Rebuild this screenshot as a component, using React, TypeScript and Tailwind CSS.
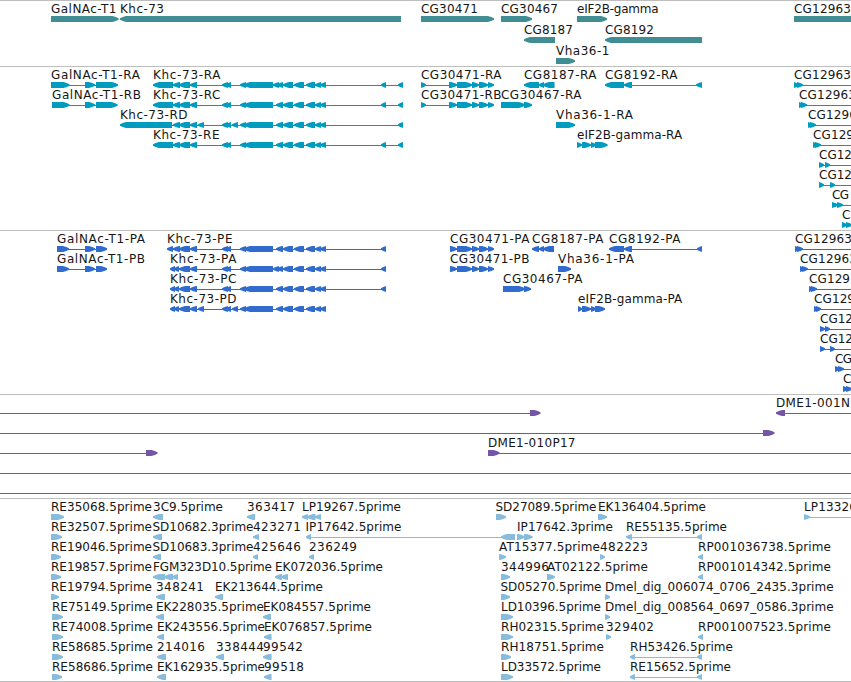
type Span = [number, number];

type Feature = {
  name?: string;
  row: number;
  dir: 1 | -1;
  blocks: Span[];
  line?: Span;
  labelX?: number;
};

const EDGE = 870;

// Label advances in pixels, digits are all 8 wide
const ADVANCE: Record<string, number> = {
  A: 8, B: 8, C: 8, D: 8, E: 7, F: 6, G: 9, H: 9, I: 3, K: 7, L: 6, M: 10, N: 9.5, P: 7, R: 8, S: 7, T: 7, V: 8,
  a: 7, c: 6.5, d: 8, e: 7, g: 7, h: 7, i: 3, l: 3, m: 10.6, p: 8, r: 5.4,
  "-": 7.5, ".": 4, _: 6,
};

const labelWidth = (text: string) =>
  text.split("").reduce((sum, ch) => sum + (ADVANCE[ch] ?? 8), 0);

const f = (
  row: number,
  name: string,
  dir: 1 | -1,
  blocks: Span[],
  line?: Span,
  labelX?: number
): Feature => ({ row, name, dir, blocks, line, labelX });

// Exons shared by the Khc-73 transcripts
const khcLeft: Span[] = [[173, 180], [179, 190], [190, 197]];
const khcMid: Span[] = [[222, 228], [226, 231]];
const khcCore: Span[] = [[240, 246], [244, 273]];
const khcSplit: Span[] = [[273, 279], [277, 283]];
const khcJoin: Span[] = [[276, 283]];
const khcRight: Span[] = [[283, 293], [294, 304], [306, 315], [315, 321], [320, 326]];
const khcExtra: Span[] = [[198, 204], [232, 238]];
const cg30471: Span[] = [[457, 472], [472, 479], [479, 488], [488, 494]];

const genes: Feature[] = [
  f(0, "GalNAc-T1", 1, [[51, 118.5]]),
  f(0, "Khc-73", -1, [[120, 401]]),
  f(0, "CG30471", 1, [[421, 494]]),
  f(0, "CG30467", 1, [[501, 532]]),
  f(0, "eIF2B-gamma", 1, [[577, 607]]),
  f(0, "CG12963", 1, [[794, EDGE]]),
  f(1, "CG8187", -1, [[524, 555]]),
  f(1, "CG8192", -1, [[605, 702]]),
  f(2, "Vha36-1", 1, [[556, 575]]),
];

const transcripts: Feature[] = [
  f(0, "GalNAc-T1-RA", 1, [[51, 69.5], [85, 95], [96, 118]]),
  f(0, "Khc-73-RA", -1, [[153, 173], ...khcLeft, ...khcMid, ...khcCore, ...khcSplit, ...khcRight, [381, 386], [398, 403]]),
  f(0, "CG30471-RA", 1, [[421, 426], [449, 457], ...cg30471]),
  f(0, "CG8187-RA", -1, [[524, 539], [539, 544], [543, 554.5]]),
  f(0, "CG8192-RA", -1, [[605, 624], [624, 632], [696, 702]]),
  f(0, "CG12963", 1, [[794, 799], [797, 803]], [794, EDGE]),
  f(1, "GalNAc-T1-RB", 1, [[52, 69.5], [85, 95], [96, 117.5]]),
  f(1, "Khc-73-RC", -1, [[153, 173], ...khcLeft, ...khcMid, ...khcCore, ...khcJoin, ...khcRight, [381, 386], [398, 403]]),
  f(1, "CG30471-RB", 1, [[421, 426], [449, 457], ...cg30471]),
  f(1, "CG30467-RA", 1, [[501, 525], [524, 532]]),
  f(1, "CG12963", 1, [[799, 804], [801, 807]], [799, EDGE]),
  f(2, "Khc-73-RD", -1, [[120, 172], ...khcLeft, ...khcExtra, ...khcMid, ...khcCore, ...khcJoin, ...khcRight, [398, 403]]),
  f(2, "Vha36-1-RA", 1, [[556, 575]]),
  f(2, "CG1296", 1, [[808, 813], [810, 816]], [808, EDGE]),
  f(3, "Khc-73-RE", -1, [[153, 173], ...khcLeft, ...khcMid, ...khcCore, ...khcJoin, ...khcRight, [381, 386], [398, 403]]),
  f(3, "eIF2B-gamma-RA", 1, [[577, 582], [582, 591], [591, 596], [595, 607.5]]),
  f(3, "CG129", 1, [[813, 818], [815, 821]], [813, EDGE]),
  f(4, "CG12", 1, [[819, 824], [825, 830]], [819, EDGE]),
  f(5, "CG12", 1, [[819, 824], [830, 835]], [819, EDGE]),
  f(6, "CG", 1, [[832, 838], [837, 843]], [832, EDGE]),
  f(7, "C", 1, [[842, 847], [846, 852]], [842, EDGE]),
];

const proteins: Feature[] = [
  f(0, "GalNAc-T1-PA", 1, [[57, 69], [85, 95], [96, 107]]),
  f(0, "Khc-73-PE", -1, [[167, 173], ...khcLeft, ...khcMid, ...khcCore, ...khcJoin, ...khcRight, [381, 386]]),
  f(0, "CG30471-PA", 1, [[450, 457], ...cg30471]),
  f(0, "CG8187-PA", -1, [[532, 539], [539, 544], [543, 554]]),
  f(0, "CG8192-PA", -1, [[609, 624], [624, 632], [697, 702]]),
  f(0, "CG12963", 1, [[795, 800], [797, 803]], [795, EDGE]),
  f(1, "GalNAc-T1-PB", 1, [[57, 69], [85, 95], [96, 107]]),
  f(1, "Khc-73-PA", -1, [[170, 175], [174, 179], ...khcLeft.slice(1), ...khcMid, ...khcCore, ...khcSplit, ...khcRight, [381, 386]]),
  f(1, "CG30471-PB", 1, [[450, 457], ...cg30471]),
  f(1, "Vha36-1-PA", 1, [[558, 571]]),
  f(1, "CG12963", 1, [[800, 805], [802, 808]], [800, EDGE]),
  f(2, "Khc-73-PC", -1, [[170, 175], [174, 179], ...khcLeft.slice(1), ...khcMid, ...khcCore, ...khcJoin, ...khcRight, [381, 386]]),
  f(2, "CG30467-PA", 1, [[503, 525], [524, 531]]),
  f(2, "CG129", 1, [[809, 814], [811, 817]], [809, EDGE]),
  f(3, "Khc-73-PD", -1, [[170, 175], [174, 179], ...khcLeft.slice(1), ...khcExtra, ...khcMid, ...khcCore, ...khcJoin, ...khcRight]),
  f(3, "eIF2B-gamma-PA", 1, [[578, 582], [582, 591], [591, 596], [595, 605]]),
  f(3, "CG129", 1, [[814, 819], [816, 821]], [814, EDGE]),
  f(4, "CG12", 1, [[820, 825], [825, 830]], [820, EDGE]),
  f(5, "CG12", 1, [[820, 825], [830, 835]], [820, EDGE]),
  f(6, "CG", 1, [[835, 840], [838, 844]], [835, EDGE]),
  f(7, "C", 1, [[843, 848], [846, 852]], [843, EDGE]),
];

const clones: Feature[] = [
  { row: 0, dir: 1, blocks: [[530, 540.5]], line: [0, 538] },
  f(0, "DME1-001N", -1, [[776, 785]], [778, EDGE], 776),
  { row: 1, dir: 1, blocks: [[763, 774.5]], line: [0, 772] },
  { row: 2, dir: 1, blocks: [[146, 157.5]], line: [0, 155] },
  f(2, "DME1-010P17", 1, [[488, 499.5]], [488, EDGE]),
  { row: 3, dir: 1, blocks: [], line: [0, EDGE] },
  { row: 4, dir: 1, blocks: [], line: [0, EDGE] },
];

const ests: Feature[] = [
  f(0, "RE35068.5prime", 1, [[51, 64]]),
  f(0, "3C9.5prime", -1, [[153, 163]]),
  f(0, "363417", -1, [[247, 255]]),
  f(0, "LP19267.5prime", -1, [[302, 308], [307, 315.5], [315, 321]]),
  f(0, "SD27089.5prime", 1, [[496, 506]], undefined, 495.5),
  f(0, "EK136404.5prime", 1, [[598, 607]]),
  f(0, "LP13326", 1, [[804, 810]], [804, EDGE]),
  f(1, "RE32507.5prime", 1, [[51, 62]]),
  f(1, "SD10682.3prime", -1, [[153, 162]], undefined, 152.5),
  f(1, "423271", -1, [[253, 259]]),
  f(1, "IP17642.5prime", -1, [[306, 311], [501, 515]], undefined, 305.5),
  f(1, "IP17642.3prime", 1, [[517, 524.5], [524, 532.5]]),
  f(1, "RE55135.5prime", -1, [[626, 632], [697, 702]]),
  f(2, "RE19046.5prime", 1, [[51, 61]]),
  f(2, "SD10683.3prime", -1, [[153, 161]], undefined, 152.5),
  f(2, "425646", -1, [[253, 258]]),
  f(2, "236249", -1, [[309, 314]]),
  f(2, "AT15377.5prime", 1, [[499, 506]]),
  f(2, "482223", 1, [[600, 605]]),
  f(2, "RP001036738.5prime", -1, [[698, 703]]),
  f(3, "RE19857.5prime", 1, [[51, 61]]),
  f(3, "FGM323D10.5prime", -1, [[153, 165], [164, 173], [172, 178]]),
  f(3, "EK072036.5prime", -1, [[275, 282], [281, 288]]),
  f(3, "344996", 1, [[501, 510]]),
  f(3, "AT02122.5prime", 1, [[547, 555]]),
  f(3, "RP001014342.5prime", -1, [[698, 703]]),
  f(4, "RE19794.5prime", 1, [[51, 59]]),
  f(4, "348241", -1, [[156, 165]]),
  f(4, "EK213644.5prime", -1, [[215, 223]]),
  f(4, "SD05270.5prime", 1, [[501, 510]], undefined, 500.5),
  f(4, "Dmel_dig_006074_0706_2435.3prime", 1, [[605, 610]]),
  f(5, "RE75149.5prime", 1, [[52, 63]]),
  f(5, "EK228035.5prime", -1, [[156, 164]]),
  f(5, "EK084557.5prime", -1, [[263, 271]]),
  f(5, "LD10396.5prime", 1, [[501, 513]]),
  f(5, "Dmel_dig_008564_0697_0586.3prime", 1, [[605, 610]]),
  f(6, "RE74008.5prime", 1, [[52, 63]]),
  f(6, "EK243556.5prime", -1, [[157, 164]]),
  f(6, "EK076857.5prime", -1, [[264, 271.5]]),
  f(6, "RH02315.5prime", 1, [[501, 513]]),
  f(6, "329402", 1, [[606, 611]]),
  f(6, "RP001007523.5prime", -1, [[698, 703]]),
  f(7, "RE58685.5prime", 1, [[52, 63]]),
  f(7, "214016", -1, [[157, 166]]),
  f(7, "338444", -1, [[216, 224]]),
  f(7, "99542", -1, [[263, 271.5]]),
  f(7, "RH18751.5prime", 1, [[501, 511]]),
  f(7, "RH53426.5prime", -1, [[630, 635], [697, 702]]),
  f(8, "RE58686.5prime", 1, [[52, 62]]),
  f(8, "EK162935.5prime", -1, [[157, 166]]),
  f(8, "99518", -1, [[264, 271.5]]),
  f(8, "LD33572.5prime", 1, [[501, 513]]),
  f(8, "RE15652.5prime", -1, [[630, 635], [697, 702]]),
];

// Bar with a slightly rounded arrow head on its leading end
function blockPoints([a, b]: Span, dir: 1 | -1, y: number) {
  const head = Math.min(b - a, 6);
  const tip = dir === 1 ? b : a;
  const back = dir === 1 ? a : b;
  const neck = tip - dir * head;
  const mid = tip - dir * head * 0.45;
  return [
    [back, y],
    [neck, y],
    [mid, y + 0.9],
    [tip, y + 2.2],
    [tip, y + 3.8],
    [mid, y + 5.1],
    [neck, y + 6],
    [back, y + 6],
  ].join(" ");
}

function Track({
  features,
  color,
  pitch = 20,
  className,
}: {
  features: Feature[];
  color: string;
  pitch?: number;
  className: string;
}) {
  return (
    <section className={`w-full shrink-0 overflow-hidden border-t border-[#bebebe] ${className}`}>
      <svg className="block h-full w-full" fill={color}>
        {features.map((item, i) => {
          const y = 15 + item.row * pitch;
          const blocks = item.blocks;
          const [from, to] = item.line ?? [blocks[0][0], Math.max(...blocks.map((b) => b[1]))];
          return (
            <g key={i}>
              <rect x={from} y={y + 3} width={to - from} height={1} />
              {blocks.map((block, j) => (
                <polygon key={j} points={blockPoints(block, item.dir, y)} />
              ))}
              {item.name && (
                <text
                  x={item.labelX ?? from}
                  y={y - 3}
                  textLength={labelWidth(item.name)}
                  className="fill-[#161616] font-['DejaVu_Sans',sans-serif] text-[12px]"
                >
                  {item.name}
                </text>
              )}
            </g>
          );
        })}
      </svg>
    </section>
  );
}

export default function App() {
  return (
    <main className="flex h-[682px] w-[851px] flex-col overflow-hidden border-b border-[#bebebe] bg-white">
      <Track features={genes} color="#408e93" pitch={21} className="h-[66px]" />
      <Track features={transcripts} color="#009cc0" className="h-[164px]" />
      <Track features={proteins} color="#306bcd" className="h-[164px]" />
      <Track features={clones} color="#7455a6" className="h-[104px]" />
      <Track features={ests} color="#87bcdd" className="h-[183px]" />
    </main>
  );
}
